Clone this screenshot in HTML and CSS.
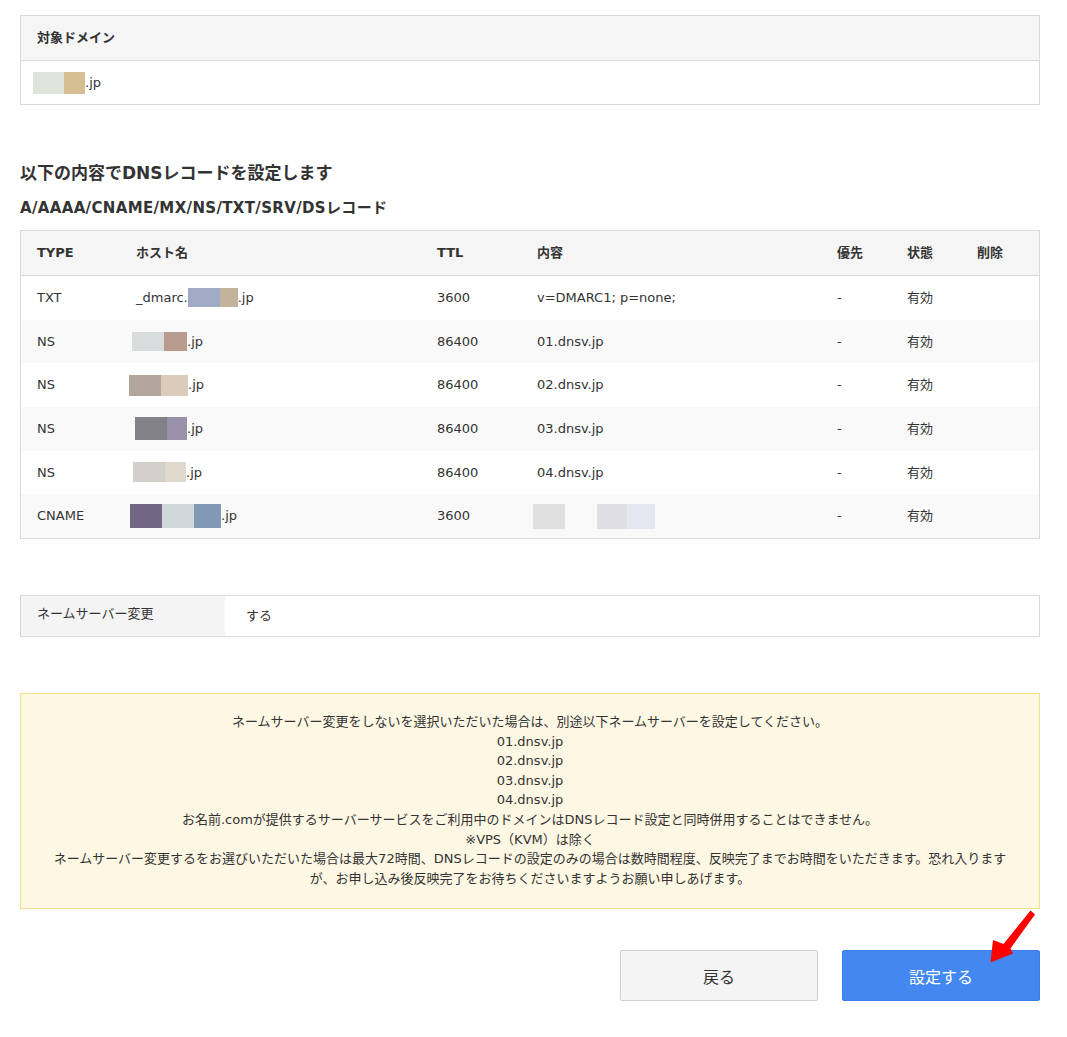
FILE: index.html
```html
<!DOCTYPE html>
<html lang="ja">
<head>
<meta charset="utf-8">
<title>DNSレコード設定 確認</title>
<link rel="stylesheet" href="styles.css">
</head>
<body>
<div class="page">
  <div class="box domain-box">
    <div class="box-head">対象ドメイン</div>
    <div class="box-body"><span class="blk w31 c-d1"></span><span class="blk w21 c-d2"></span>.jp</div>
  </div>

  <h2 class="title">以下の内容でDNSレコードを設定します</h2>
  <h3 class="subtitle">A/AAAA/CNAME/MX/NS/TXT/SRV/DSレコード</h3>

  <div class="dns">
    <div class="row head">
      <div class="cell">TYPE</div>
      <div class="cell">ホスト名</div>
      <div class="cell">TTL</div>
      <div class="cell">内容</div>
      <div class="cell">優先</div>
      <div class="cell">状態</div>
      <div class="cell">削除</div>
    </div>
    <div class="row">
      <div class="cell">TXT</div>
      <div class="cell">_dmarc.<span class="blk w32 h19 c-a1"></span><span class="blk w18 h19 c-a2"></span>.jp</div>
      <div class="cell">3600</div>
      <div class="cell">v=DMARC1; p=none;</div>
      <div class="cell">-</div>
      <div class="cell">有効</div>
      <div class="cell"></div>
    </div>
    <div class="row alt">
      <div class="cell">NS</div>
      <div class="cell"><span class="blk w32 h19 c-b1 sh4"></span><span class="blk w23 h19 c-b2"></span>.jp</div>
      <div class="cell">86400</div>
      <div class="cell">01.dnsv.jp</div>
      <div class="cell">-</div>
      <div class="cell">有効</div>
      <div class="cell"></div>
    </div>
    <div class="row">
      <div class="cell">NS</div>
      <div class="cell"><span class="blk w32 h21 c-c1 sh7"></span><span class="blk w27 h21 c-c2"></span>.jp</div>
      <div class="cell">86400</div>
      <div class="cell">02.dnsv.jp</div>
      <div class="cell">-</div>
      <div class="cell">有効</div>
      <div class="cell"></div>
    </div>
    <div class="row alt">
      <div class="cell">NS</div>
      <div class="cell"><span class="blk w32 h23 c-e1 sh1"></span><span class="blk w20 h23 c-e2"></span>.jp</div>
      <div class="cell">86400</div>
      <div class="cell">03.dnsv.jp</div>
      <div class="cell">-</div>
      <div class="cell">有効</div>
      <div class="cell"></div>
    </div>
    <div class="row">
      <div class="cell">NS</div>
      <div class="cell"><span class="blk w32 h20 c-f1 sh3"></span><span class="blk w21 h20 c-f2"></span>.jp</div>
      <div class="cell">86400</div>
      <div class="cell">04.dnsv.jp</div>
      <div class="cell">-</div>
      <div class="cell">有効</div>
      <div class="cell"></div>
    </div>
    <div class="row alt">
      <div class="cell">CNAME</div>
      <div class="cell"><span class="blk w32 h24 c-g1 sh6"></span><span class="blk w32 h24 c-g2"></span><span class="blk w27 h24 c-g3"></span>.jp</div>
      <div class="cell">3600</div>
      <div class="cell content-blur"><span class="blk w32 h25 c-h1 sh4"></span><span class="blk w30 h25 c-h2 gap32"></span><span class="blk w28 h25 c-h3"></span></div>
      <div class="cell">-</div>
      <div class="cell">有効</div>
      <div class="cell"></div>
    </div>
  </div>

  <div class="ns-box">
    <div class="ns-label">ネームサーバー変更</div>
    <div class="ns-value">する</div>
  </div>

  <div class="notice">
    <p>ネームサーバー変更をしないを選択いただいた場合は、別途以下ネームサーバーを設定してください。</p>
    <p>01.dnsv.jp</p>
    <p>02.dnsv.jp</p>
    <p>03.dnsv.jp</p>
    <p>04.dnsv.jp</p>
    <p>お名前.comが提供するサーバーサービスをご利用中のドメインはDNSレコード設定と同時併用することはできません。</p>
    <p>※VPS（KVM）は除く</p>
    <p>ネームサーバー変更するをお選びいただいた場合は最大72時間、DNSレコードの設定のみの場合は数時間程度、反映完了までお時間をいただきます。恐れ入ります<br>が、お申し込み後反映完了をお待ちくださいますようお願い申しあげます。</p>
  </div>

  <div class="actions">
    <button class="btn btn-back" type="button">戻る</button>
    <button class="btn btn-submit" type="button">設定する</button>
  </div>

  <svg class="arrow" viewBox="985 905 55 65" width="55" height="65" aria-hidden="true">
    <polygon points="1030.5,910.5 1035,914.5 1010.5,948.5 1013,953.5 990.5,962.5 993,940 1003.5,944" fill="#ff0000"/>
  </svg>
</div>
</body>
</html>
```

FILE: styles.css
```css
html, body {
  margin: 0;
  padding: 0;
  background: #ffffff;
}

body {
  font-family: "DejaVu Sans", "Noto Sans CJK JP", sans-serif;
  font-size: 13px;
  color: #333333;
  line-height: 1.5;
}

.page {
  position: relative;
  width: 1020px;
  margin-left: 20px;
  padding-top: 15px;
  padding-bottom: 36px;
}

/* generic blurred blocks */
.blk {
  display: inline-block;
  vertical-align: middle;
  height: 22px;
}
.w18 { width: 18px; }
.w20 { width: 20px; }
.w21 { width: 21px; }
.w23 { width: 23px; }
.w27 { width: 27px; }
.w28 { width: 28px; }
.w30 { width: 30px; }
.w31 { width: 31px; }
.w32 { width: 32px; }
.h19 { height: 19px; }
.h20 { height: 20px; }
.h21 { height: 21px; }
.h23 { height: 23px; }
.h24 { height: 24px; }
.h25 { height: 25px; }
.sh1 { margin-left: -1px; }
.sh3 { margin-left: -3px; }
.sh4 { margin-left: -4px; }
.sh6 { margin-left: -6px; }
.sh7 { margin-left: -7px; }
.gap32 { margin-left: 32px; }

.c-d1 { background: #e0e2dc; }
.c-d2 { background: #d6bf92; }
.c-a1 { background: #a1aac4; }
.c-a2 { background: #c4b39b; }
.c-b1 { background: #d8dcdc; }
.c-b2 { background: #b89b8e; }
.c-c1 { background: #b2a69b; }
.c-c2 { background: #dccbbb; }
.c-e1 { background: #818187; }
.c-e2 { background: #9891a9; }
.c-f1 { background: #d3cfcb; }
.c-f2 { background: #e0d9cd; }
.c-g1 { background: #726682; }
.c-g2 { background: #d0d8da; }
.c-g3 { background: #8199b6; }
.c-h1 { background: #e0e0e0; }
.c-h2 { background: #dfdee5; }
.c-h3 { background: #e3e6ef; }

/* top domain box */
.box {
  border: 1px solid #d9d9d9;
}
.box-head {
  height: 44px;
  display: flex;
  align-items: center;
  padding-left: 16px;
  background: #f5f5f5;
  border-bottom: 1px solid #d9d9d9;
  font-weight: bold;
}
.box-body {
  height: 43px;
  display: flex;
  align-items: center;
  padding-left: 12px;
}
.box-body .blk {
  height: 22px;
}

/* headings */
.title {
  margin: 56px 0 0;
  font-size: 17px;
  line-height: 25px;
  font-weight: bold;
  color: #333333;
}
.subtitle {
  margin: 11px 0 0;
  font-size: 15px;
  line-height: 22px;
  letter-spacing: 0.35px;
  font-weight: bold;
  color: #333333;
}

/* dns table */
.dns {
  margin-top: 11px;
  border: 1px solid #d9d9d9;
}
.row {
  display: grid;
  grid-template-columns: 99px 301px 100px 300px 70px 70px 78px;
  height: 43.67px;
  align-items: center;
}
.row.head {
  height: 44px;
  background: #f5f5f5;
  border-bottom: 1px solid #d9d9d9;
  font-weight: bold;
}
.row.alt {
  background: #f9f9f9;
}
.cell {
  padding-left: 16px;
  white-space: nowrap;
  display: flex;
  align-items: center;
}

/* name server box */
.ns-box {
  margin-top: 56px;
  display: flex;
  border: 1px solid #d9d9d9;
  height: 40px;
}
.ns-label {
  width: 204px;
  box-sizing: border-box;
  background: #f4f4f4;
  padding: 8px 0 0 16px;
  line-height: 19.5px;
}
.ns-value {
  display: flex;
  align-items: center;
  padding-left: 21px;
}

/* notice */
.notice {
  margin-top: 56px;
  border: 1px solid #f3e08a;
  background: #fdf7e3;
  padding: 18px 20px 20px;
  text-align: center;
  line-height: 19.6px;
}
.notice p {
  margin: 0;
}

/* buttons */
.actions {
  margin-top: 41px;
  display: flex;
  justify-content: flex-end;
  gap: 24px;
}
.btn {
  width: 198px;
  height: 51px;
  border-radius: 2px;
  font-family: "Noto Sans CJK JP", sans-serif;
  font-size: 16px;
  cursor: pointer;
}
.btn-back {
  background: #f4f4f4;
  border: 1px solid #d0d0d0;
  color: #333333;
}
.btn-submit {
  background: #4387f0;
  border: 1px solid #3a7fe9;
  color: #ffffff;
}

.arrow {
  position: absolute;
  left: 965px;
  top: 905px;
}
```
